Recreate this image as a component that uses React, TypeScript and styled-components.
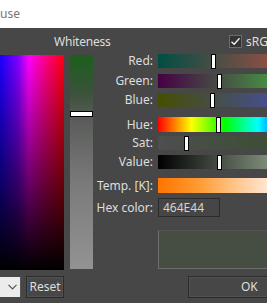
import React from 'react';
import styled, { createGlobalStyle } from 'styled-components';

const Global = createGlobalStyle`
  html, body { margin: 0; padding: 0; background: #ffffff; }
  body {
    width: 267px; height: 303px; overflow: hidden;
    font-family: "Noto Sans", "Open Sans", sans-serif;
  }
`;

const Window = styled.div`
  width: 267px;
  height: 303px;
  display: flex;
  flex-direction: column;
  overflow: hidden;
`;

const TitleBar = styled.div`
  height: 28px;
  flex: none;
  background: #ffffff;
  color: #767676;
  font-size: 12px;
  display: flex;
  align-items: center;
  padding-bottom: 2px;
  box-sizing: border-box;
`;

const Dialog = styled.div`
  flex: 1;
  background: #474747;
  color: #dedede;
  font-size: 12px;
  display: flex;
  flex-direction: column;
`;

const Header = styled.div`
  height: 26px;
  display: flex;
  align-items: center;
  padding-top: 1px;
  box-sizing: border-box;
`;

const WhitenessTitle = styled.span`
  margin-left: 54px;
  flex: 1;
  letter-spacing: -0.2px;
`;

const CheckBox = styled.span`
  width: 13px;
  height: 13px;
  flex: none;
  box-sizing: border-box;
  border: 1px solid #6b6b6b;
  background: #333333;
  display: flex;
  align-items: center;
  justify-content: center;
  margin-right: 4px;
`;

const CheckText = styled.span`
  width: 21px;
  flex: none;
  white-space: nowrap;
`;

const Main = styled.div`
  display: flex;
  height: 216px;
`;

const ColorSquare = styled.div`
  margin-top: 1px;
  width: 64px;
  height: 215px;
  flex: none;
  background:
    linear-gradient(to bottom, rgba(0,0,0,0) 0%, rgba(0,0,0,0.55) 55%, #000 100%),
    linear-gradient(to right, #1800ff 0%, #8000ff 28%, #ff00ff 45%, #ff0080 72%, #ff0010 100%);
`;

const WhitenessBar = styled.div`
  position: relative;
  margin: 1px 0 0 6px;
  width: 23px;
  height: 214px;
  flex: none;
  background: linear-gradient(to bottom, #1b5f1b 0%, #3c523c 18%, #5a5c5a 30%, #7a7a7a 60%, #939393 100%);
`;

const VHandle = styled.div<{ $y: number }>`
  position: absolute;
  left: 0;
  right: 0;
  top: ${p => p.$y}px;
  height: 6px;
  box-sizing: border-box;
  border: 1px solid #000;
  background: #ffffff;
`;

const Controls = styled.div`
  margin-left: 1px;
  flex: none;
  display: flex;
  flex-direction: column;
`;

const Row = styled.div<{ $mt: number; $h?: number }>`
  display: grid;
  grid-template-columns: 59px 200px;
  column-gap: 5px;
  align-items: center;
  margin-top: ${p => p.$mt}px;
  height: ${p => p.$h ?? 14}px;
`;

const Label = styled.span`
  text-align: right;
  white-space: nowrap;
  line-height: 14px;
`;

const Bar = styled.div<{ $bg: string }>`
  position: relative;
  height: 100%;
  background: ${p => p.$bg};
`;

const Handle = styled.div<{ $x: number; $fill?: string }>`
  position: absolute;
  top: 0;
  bottom: -1px;
  left: ${p => p.$x}px;
  width: 5px;
  box-sizing: border-box;
  border: 1px solid #000;
  background: ${p => p.$fill ?? '#ffffff'};
`;

const HexInput = styled.div`
  width: 62px;
  height: 19px;
  box-sizing: border-box;
  border: 1px solid #2c2c2c;
  background: #464646;
  color: #d4d4d4;
  padding-left: 4px;
  line-height: 17px;
`;

const Preview = styled.div`
  height: 39px;
  box-sizing: border-box;
  border: 1px solid #6f6f6f;
  border-top-color: #555555;
  background: #464e44;
`;

const Footer = styled.div`
  display: flex;
  margin-top: 6px;
  height: 22px;
  align-items: flex-start;
`;

const Dropdown = styled.div`
  margin-top: 1px;
  width: 21px;
  height: 20px;
  flex: none;
  box-sizing: border-box;
  background: #ececec;
  border-right: 1px solid #555;
  display: flex;
  align-items: center;
  justify-content: flex-end;
  padding-right: 3px;
`;

const Button = styled.button<{ $w: number; $ml: number }>`
  margin-left: ${p => p.$ml}px;
  width: ${p => p.$w}px;
  flex: none;
  height: 22px;
  box-sizing: border-box;
  border: 1px solid #2b2b2b;
  box-shadow: inset 0 0 0 1px #525252;
  background: #474747;
  color: #dedede;
  font-family: inherit;
  font-size: 12px;
  padding: 0;
  line-height: 18px;
`;

const OkButton = styled(Button)`
  text-align: left;
  padding-left: 52px;
`;

const hue =
  'linear-gradient(to right, #ff0000 0%, #ffff00 16.67%, #00ff00 33.33%, #00ffff 50%, #0000ff 66.67%, #ff00ff 83.33%, #ff0000 100%)';

export default function App() {
  return (
    <Window>
      <Global />
      <TitleBar>use</TitleBar>
      <Dialog>
        <Header>
          <WhitenessTitle>Whiteness</WhitenessTitle>
          <CheckBox>
            <svg width="11" height="11" viewBox="0 0 11 11">
              <path d="M1.5 5.8 L4.2 8.3 L9.5 2.2" fill="none" stroke="#f2f2f2" strokeWidth="1.3" />
            </svg>
          </CheckBox>
          <CheckText>sRGB</CheckText>
        </Header>
        <Main>
          <ColorSquare />
          <WhitenessBar>
            <VHandle $y={56} />
          </WhitenessBar>
          <Controls>
            <Row $mt={0}>
              <Label>Red:</Label>
              <Bar $bg="linear-gradient(to right, #004e44, #ff4e44)">
                <Handle $x={53} />
              </Bar>
            </Row>
            <Row $mt={6}>
              <Label>Green:</Label>
              <Bar $bg="linear-gradient(to right, #460044, #46ff44)">
                <Handle $x={59} />
              </Bar>
            </Row>
            <Row $mt={5}>
              <Label>Blue:</Label>
              <Bar $bg="linear-gradient(to right, #464e00, #464eff)">
                <Handle $x={52} />
              </Bar>
            </Row>
            <Row $mt={10} $h={15}>
              <Label>Hue:</Label>
              <Bar $bg={hue}>
                <Handle $x={58} $fill="#eefdee" />
              </Bar>
            </Row>
            <Row $mt={4}>
              <Label>Sat:</Label>
              <Bar $bg="linear-gradient(to right, #4e4e4e, #2f4e24 100%)">
                <Handle $x={26} />
              </Bar>
            </Row>
            <Row $mt={5}>
              <Label>Value:</Label>
              <Bar $bg="linear-gradient(to right, #000000, #e5ffdf)">
                <Handle $x={59} />
              </Bar>
            </Row>
            <Row $mt={9} $h={15}>
              <Label>Temp. [K]:</Label>
              <Bar $bg="linear-gradient(to right, #ff7400 0%, #ff9a30 20%, #ffc890 40%, #ffe6d2 55%, #fff4ee 70%, #f0f0ff 100%)" />
            </Row>
            <Row $mt={5} $h={19}>
              <Label>Hex color:</Label>
              <HexInput>464E44</HexInput>
            </Row>
            <Row $mt={13} $h={39}>
              <span />
              <Preview />
            </Row>
          </Controls>
        </Main>
        <Footer>
          <Dropdown>
            <svg width="9" height="6" viewBox="0 0 9 6">
              <path d="M0.5 0.8 L4.5 4.8 L8.5 0.8" fill="none" stroke="#555" strokeWidth="1.2" />
            </svg>
          </Dropdown>
          <Button $w={38} $ml={5}>Reset</Button>
          <OkButton $w={110} $ml={124}>OK</OkButton>
        </Footer>
      </Dialog>
    </Window>
  );
}
